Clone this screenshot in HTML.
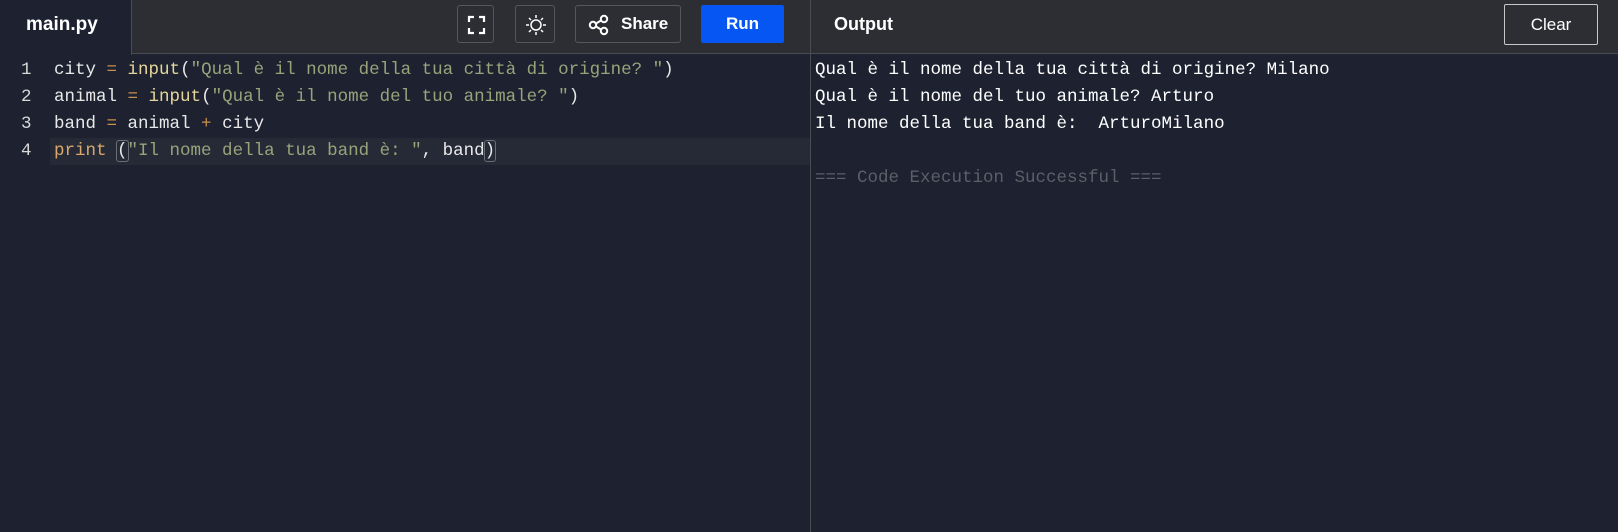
<!DOCTYPE html>
<html><head><meta charset="utf-8"><style>
*{margin:0;padding:0;box-sizing:border-box}
body{width:1618px;height:532px;background:#1d2130;position:relative;overflow:hidden;font-family:"Liberation Sans",sans-serif}
.hdr{position:absolute;left:0;top:0;width:1618px;height:54px;background:#2c2e33;border-bottom:1px solid #4a4c52}
.tab{position:absolute;left:0;top:0;width:132px;height:55px;background:#1d2130;border-right:1px solid #4a4c52;color:#fff;font-weight:bold;font-size:19px;padding:14px 0 0 26px}
.btn{position:absolute;top:5px;height:38px;border:1px solid #55575d;border-radius:3px}
.run{position:absolute;left:701px;top:5px;width:83px;height:38px;background:#0556f3;border-radius:2px;color:#fff;font-weight:bold;font-size:17px;text-align:center;line-height:38px}
.div{position:absolute;left:810px;top:0;width:1px;height:532px;background:#4a4c52}
.out{position:absolute;left:834px;top:14px;color:#fff;font-weight:bold;font-size:18px}
.clear{position:absolute;left:1504px;top:4px;width:94px;height:41px;border:1px solid #c8c8c8;border-radius:2px;color:#fff;font-size:17px;text-align:center;line-height:39px}
.code{position:absolute;top:57px;font-family:"Liberation Mono",monospace;font-size:17.5px;line-height:27px;white-space:pre;color:#e8e8e8}
.hl{position:absolute;left:50px;top:138px;width:760px;height:27px;background:#262a37}
.s{color:#9aa27a}.f{color:#e5d79c}.o{color:#c8904e}.p{color:#d9a86a}
.b{outline:1px solid #6a6e78;border-radius:2px}
</style></head><body>
<div class="hdr"></div>
<div class="tab">main.py</div>
<div class="btn" style="left:457px;width:37px"><svg width="37" height="38" viewBox="0 0 37 38"><path d="M11 16v-5h5M21 11h5v5M26 22v5h-5M16 27h-5v-5" stroke="#fff" stroke-width="2.2" fill="none"/></svg></div>
<div class="btn" style="left:515px;width:40px"><svg width="40" height="38" viewBox="0 0 40 38"><circle cx="20" cy="19" r="5" stroke="#fff" stroke-width="1.5" fill="none"/><path d="M20 9v3M20 26v3M10 19h3M27 19h3M13 12l2 2M25 24l2 2M27 12l-2 2M15 24l-2 2" stroke="#fff" stroke-width="1.5"/></svg></div>
<div class="btn" style="left:575px;width:106px"><svg style="position:absolute;left:12px;top:8px" width="22" height="22" viewBox="0 0 22 22"><circle cx="16" cy="5" r="3.2" stroke="#fff" stroke-width="2" fill="none"/><circle cx="16" cy="17" r="3.2" stroke="#fff" stroke-width="2" fill="none"/><circle cx="5" cy="11" r="3.2" stroke="#fff" stroke-width="2" fill="none"/><path d="M8 9.5l5-3M8 12.5l5 3" stroke="#fff" stroke-width="2"/></svg><span style="position:absolute;left:45px;top:8px;color:#fff;font-weight:bold;font-size:17px">Share</span></div>
<div class="run">Run</div>
<div class="div"></div>
<div class="out">Output</div>
<div class="clear">Clear</div>
<div class="hl"></div>
<div class="code" style="left:21px;color:#d8d8d8">1
2
3
4</div>
<div class="code" style="left:54px">city <span class="o">=</span> <span class="f">input</span>(<span class="s">"Qual è il nome della tua città di origine? "</span>)
animal <span class="o">=</span> <span class="f">input</span>(<span class="s">"Qual è il nome del tuo animale? "</span>)
band <span class="o">=</span> animal <span class="o">+</span> city
<span class="p">print</span> <span class="b">(</span><span class="s">"Il nome della tua band è: "</span>, band<span class="b">)</span></div>
<div class="code" style="left:815px;color:#fff">Qual è il nome della tua città di origine? Milano
Qual è il nome del tuo animale? Arturo
Il nome della tua band è:  ArturoMilano

<span style="color:#5c5f68">=== Code Execution Successful ===</span></div>
</body></html>
